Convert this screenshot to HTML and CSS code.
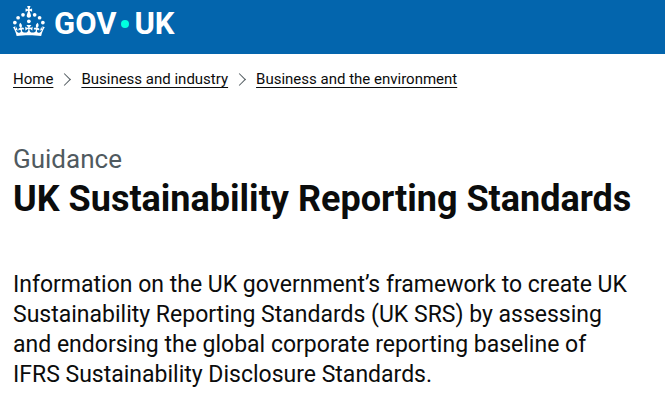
FILE: index.html
```html
<!DOCTYPE html>
<html lang="en">
<head>
<meta charset="UTF-8">
<meta name="viewport" content="width=device-width, initial-scale=1">
<title>UK Sustainability Reporting Standards - GOV.UK</title>
<link rel="stylesheet" href="styles.css">
</head>
<body>
<header class="header">
    <a class="logo" href="#" aria-label="GOV.UK">
        <svg class="crown" viewBox="0 0 64 60" aria-hidden="true">
            <circle cx="20" cy="17.6" r="3.7"/>
            <circle cx="10.2" cy="23.5" r="3.7"/>
            <circle cx="3.7" cy="33.2" r="3.7"/>
            <circle cx="31.7" cy="30.6" r="3.7"/>
            <circle cx="43.3" cy="17.6" r="3.7"/>
            <circle cx="53.2" cy="23.5" r="3.7"/>
            <circle cx="59.7" cy="33.2" r="3.7"/>
            <path d="M33.1,9.8c.2-.1.3-.3.5-.5l4.6,2.4v-6.8l-4.6,1.5c-.1-.2-.3-.3-.5-.5l1.9-5.9h-6.7l1.9,5.9c-.2.1-.3.3-.5.5l-4.6-1.5v6.8l4.6-2.4c.1.2.3.3.5.5l-2.6,8c-.9,2.8,1.2,5.7,4.1,5.7h0c3,0,5.1-2.9,4.1-5.7l-2.6-8ZM37,37.9s-3.4,3.8-4.1,6.1c2.2,0,4.2-.5,6.4-2.8l-.7,8.5c-2-2.8-4.4-4.1-5.7-3.8.1,3.1.5,6.7,5.8,7.2,3.7.3,6.7-1.5,7-3.8.4-2.6-2-4.3-3.7-1.6-1.4-4.5,2.4-6.1,4.9-3.2-1.9-4.5-1.8-7.7,2.4-10.9,3,4,2.6,7.3-1.2,11.1,2.4-1.3,6.2,0,4,4.6-1.2-2.8-3.7-2.2-4.2.2-.3,1.7.7,3.7,3,4.2,1.9.3,4.7-.9,7-5.9-1.3,0-2.4.7-3.9,1.7l2.4-8c.6,2.3,1.4,3.7,2.2,4.5.6-1.6.5-2.8,0-5.3l5,1.8c-2.6,3.6-5.2,8.7-7.3,17.5-7.4-1.1-15.7-1.7-24.5-1.7h0c-8.8,0-17.1.6-24.5,1.7-2.1-8.9-4.7-13.9-7.3-17.5l5-1.8c-.5,2.5-.6,3.7,0,5.3.8-.8,1.6-2.3,2.2-4.5l2.4,8c-1.5-1-2.6-1.7-3.9-1.7,2.3,5,5.2,6.2,7,5.9,2.3-.4,3.3-2.4,3-4.2-.5-2.4-3-3.1-4.2-.2-2.2-4.6,1.6-6,4-4.6-3.7-3.7-4.2-7.1-1.2-11.1,4.2,3.2,4.3,6.4,2.4,10.9,2.5-2.8,6.3-1.3,4.9,3.2-1.8-2.7-4.1-1-3.7,1.6.3,2.3,3.3,4.1,7,3.8,5.4-.5,5.7-4.2,5.8-7.2-1.3-.2-3.7,1-5.7,3.8l-.7-8.5c2.2,2.3,4.2,2.7,6.4,2.8-.7-2.3-4.1-6.1-4.1-6.1h10.6Z"/>
        </svg>
        <span class="wordmark">GOV<span class="dot"></span>UK</span>
    </a>
</header>
<nav class="breadcrumbs" aria-label="Breadcrumb">
    <ol>
        <li><a href="#">Home</a></li>
        <li><a href="#">Business and industry</a></li>
        <li><a href="#">Business and the environment</a></li>
    </ol>
</nav>
<main class="content">
    <p class="caption">Guidance</p>
    <h1>UK Sustainability Reporting Standards</h1>
    <p class="lead">Information on the UK government’s framework to create UK Sustainability Reporting Standards (UK SRS) by assessing and endorsing the global corporate reporting baseline of IFRS Sustainability Disclosure Standards.</p>
</main>
</body>
</html>
```
FILE: styles.css
```css
*{
    margin:0;
    padding:0;
    box-sizing:border-box;
}
body{
    background:#fff;
    color:#0b0c0c;
    font-family:Roboto,"Liberation Sans",sans-serif;
}
.header{
    padding:6px 13px 18px;
    background:#0365ad;
}
.logo{
    display:inline-flex;
    align-items:center;
    gap:9px;
    height:30px;
    vertical-align:top;
    color:#fff;
    text-decoration:none;
}
.crown{
    width:32px;
    height:30px;
    fill:#fff;
}
.wordmark{
    display:flex;
    align-items:center;
    padding-top:6px;
    font-size:31px;
    font-weight:700;
    line-height:30px;
}
.dot{
    width:8px;
    height:8px;
    margin:0 5px;
    border-radius:50%;
    background:#00ffe0;
}
.breadcrumbs{
    padding:15px 13px 0;
    font-size:15px;
    line-height:20px;
}
.breadcrumbs ol{
    display:flex;
    flex-wrap:wrap;
    list-style:none;
}
.breadcrumbs li{
    display:flex;
    align-items:center;
}
.breadcrumbs li + li::before{
    content:"";
    width:8px;
    height:8px;
    margin:0 12px 0 7px;
    border:solid #505a5f;
    border-width:1px 1px 0 0;
    transform:rotate(45deg);
}
.breadcrumbs a{
    color:#0b0c0c;
    text-decoration:underline;
    text-decoration-thickness:1px;
    text-underline-offset:3px;
}
.content{
    padding:54px 13px 30px;
}
.caption{
    color:#505a5f;
    font-size:26px;
    line-height:32px;
}
h1{
    font-size:36px;
    font-weight:700;
    line-height:48px;
}
.lead{
    max-width:620px;
    margin-top:47px;
    font-size:23px;
    line-height:30px;
}
```
